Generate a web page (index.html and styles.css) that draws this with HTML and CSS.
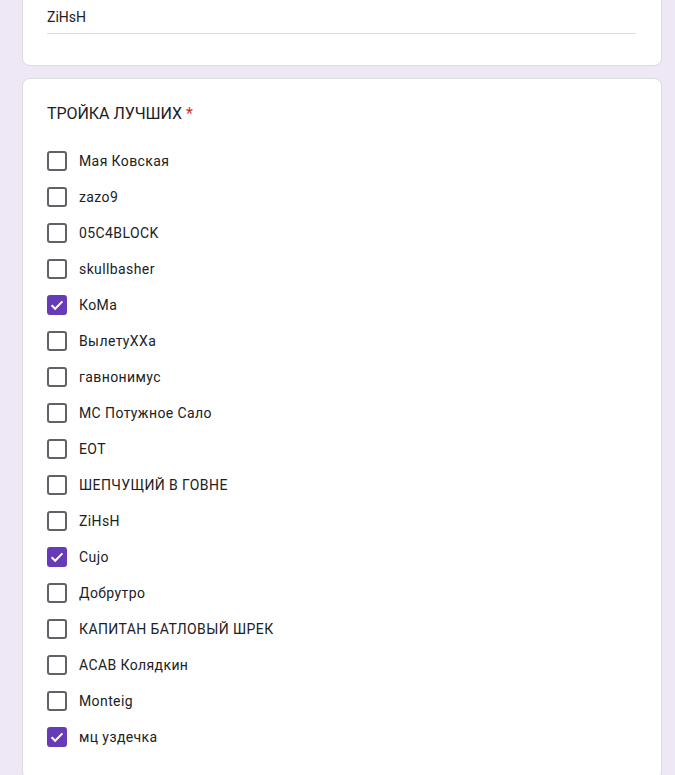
FILE: index.html
```html
<!DOCTYPE html>
<html lang="ru">
<head>
<meta charset="utf-8">
<link rel="stylesheet" href="styles.css">
</head>
<body>
<div class="page">
  <div class="card card-top">
    <div class="answer">ZiHsH</div>
  </div>
  <div class="card">
    <div class="title">ТРОЙКА ЛУЧШИХ <span class="req">*</span></div>
    <ul class="options">
      <li class="opt"><span class="box"></span><span class="label">Мая Ковская</span></li>
      <li class="opt"><span class="box"></span><span class="label">zazo9</span></li>
      <li class="opt"><span class="box"></span><span class="label">05C4BLOCK</span></li>
      <li class="opt"><span class="box"></span><span class="label">skullbasher</span></li>
      <li class="opt"><span class="box checked"><svg viewBox="0 0 20 20" width="20" height="20"><path d="M4.6 10.2l3.6 3.6 7.2-7.4" fill="none" stroke="#fff" stroke-width="2"/></svg></span><span class="label">КоМа</span></li>
      <li class="opt"><span class="box"></span><span class="label">ВылетуХХа</span></li>
      <li class="opt"><span class="box"></span><span class="label">гавнонимус</span></li>
      <li class="opt"><span class="box"></span><span class="label">МС Потужное Сало</span></li>
      <li class="opt"><span class="box"></span><span class="label">EOT</span></li>
      <li class="opt"><span class="box"></span><span class="label">ШЕПЧУЩИЙ В ГОВНЕ</span></li>
      <li class="opt"><span class="box"></span><span class="label">ZiHsH</span></li>
      <li class="opt"><span class="box checked"><svg viewBox="0 0 20 20" width="20" height="20"><path d="M4.6 10.2l3.6 3.6 7.2-7.4" fill="none" stroke="#fff" stroke-width="2"/></svg></span><span class="label">Cujo</span></li>
      <li class="opt"><span class="box"></span><span class="label">Добрутро</span></li>
      <li class="opt"><span class="box"></span><span class="label">КАПИТАН БАТЛОВЫЙ ШРЕК</span></li>
      <li class="opt"><span class="box"></span><span class="label">ACAB Колядкин</span></li>
      <li class="opt"><span class="box"></span><span class="label">Monteig</span></li>
      <li class="opt"><span class="box checked"><svg viewBox="0 0 20 20" width="20" height="20"><path d="M4.6 10.2l3.6 3.6 7.2-7.4" fill="none" stroke="#fff" stroke-width="2"/></svg></span><span class="label">мц уздечка</span></li>
    </ul>
  </div>
</div>
</body>
</html>
```
FILE: styles.css
```css
html, body {
  margin: 0;
  padding: 0;
  background: #ede7f6;
  font-family: Roboto, "Liberation Sans", Arial, sans-serif;
  color: #202124;
}
.page {
  width: 640px;
  margin: -40px 0 0 22px;
  display: flex;
  flex-direction: column;
  gap: 12px;
}
.card {
  background: #fff;
  border: 1px solid #dadce0;
  border-radius: 8px;
  padding: 23px 24px 24px;
}
.card-top {
  padding-top: 46px;
  padding-bottom: 31px;
}
.answer {
  font-size: 14px;
  line-height: 20px;
  padding-bottom: 6px;
  border-bottom: 1px solid #dadce0;
  margin-right: 1px;
}
.title {
  font-size: 16px;
  line-height: 24px;
  letter-spacing: -0.05px;
  margin-bottom: 17px;
}
.req {
  color: #d93025;
}
.options {
  list-style: none;
  margin: 0;
  padding: 0;
}
.opt {
  height: 36px;
  display: flex;
  align-items: center;
  gap: 12px;
}
.box {
  box-sizing: border-box;
  width: 20px;
  height: 20px;
  border: 2px solid #5f6368;
  border-radius: 3px;
  flex: none;
  position: relative;
}
.box.checked {
  background: #673ab7;
  border-color: #673ab7;
}
.box svg {
  position: absolute;
  left: -2px;
  top: -2px;
}
.label {
  font-size: 14px;
  line-height: 20px;
  letter-spacing: 0.4px;
}
```
